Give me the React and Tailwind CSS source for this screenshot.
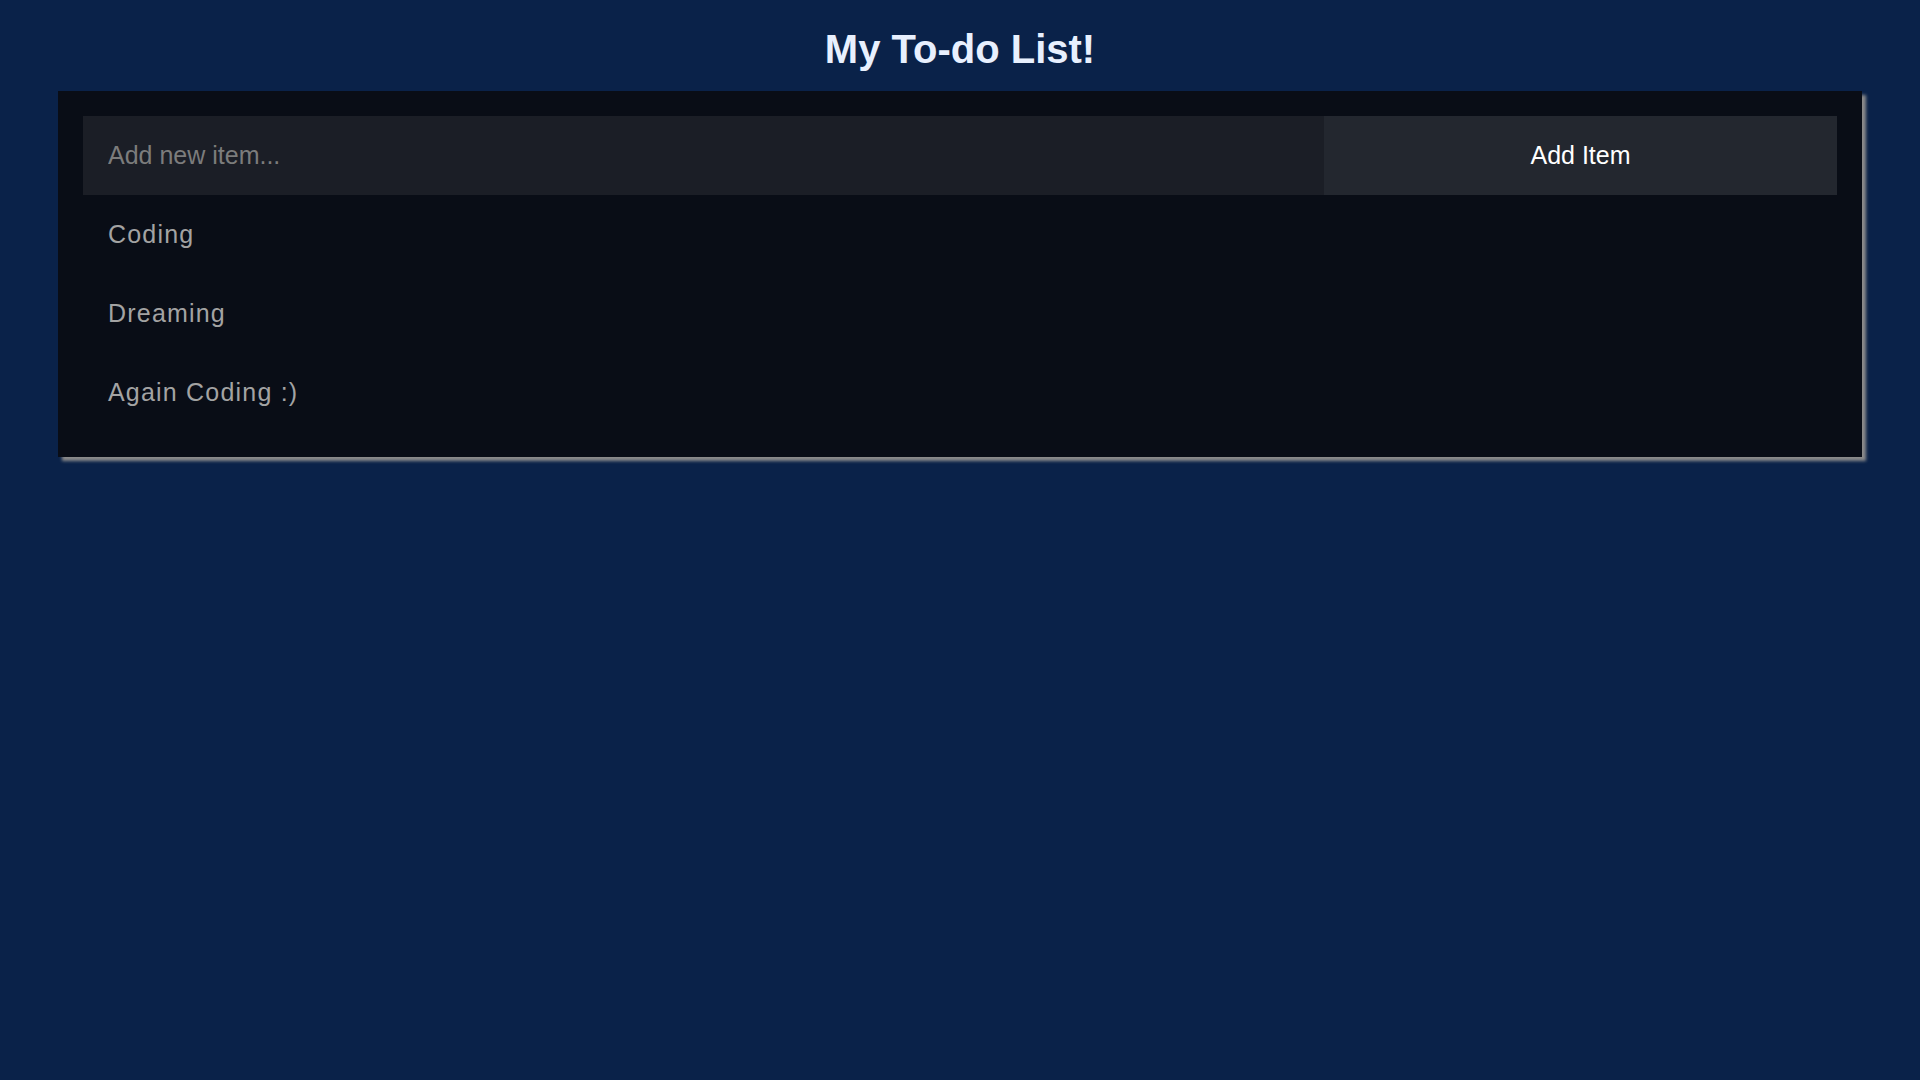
import { useState } from "react";

const INITIAL_ITEMS = ["Coding", "Dreaming", "Again Coding :)"];

export default function App() {
  const [items, setItems] = useState(INITIAL_ITEMS);
  const [text, setText] = useState("");

  const addItem = () => {
    if (!text.trim()) return;
    setItems([...items, text.trim()]);
    setText("");
  };

  return (
    <div className="min-h-screen bg-[#0a2249] font-['Liberation_Sans',Arial,sans-serif]">
      <h1 className="pt-[26px] text-center text-[40px] font-bold leading-[46px] text-[#e8f0fe]">
        My To-do List!
      </h1>
      <div className="mx-[58px] mt-[19px] bg-[#090d16] p-[25px] shadow-[4px_4px_3px_#8a8a8a]">
        <div className="flex h-[79px]">
          <input
            value={text}
            onChange={(event) => setText(event.target.value)}
            onKeyDown={(event) => event.key === "Enter" && addItem()}
            placeholder="Add new item..."
            className="min-w-0 flex-1 bg-[#1b1e26] px-[25px] text-[25px] text-white outline-none placeholder:text-[#7c7c7c]"
          />
          <button
            type="button"
            onClick={addItem}
            className="w-[513px] bg-[#23272f] text-[25px] text-white"
          >
            Add Item
          </button>
        </div>
        <ul>
          {items.map((item, i) => (
            <li
              key={i}
              className="flex h-[79px] items-center px-[25px] text-[25px] tracking-[1.2px] text-[#a3a3a3]"
            >
              {item}
            </li>
          ))}
        </ul>
      </div>
    </div>
  );
}
